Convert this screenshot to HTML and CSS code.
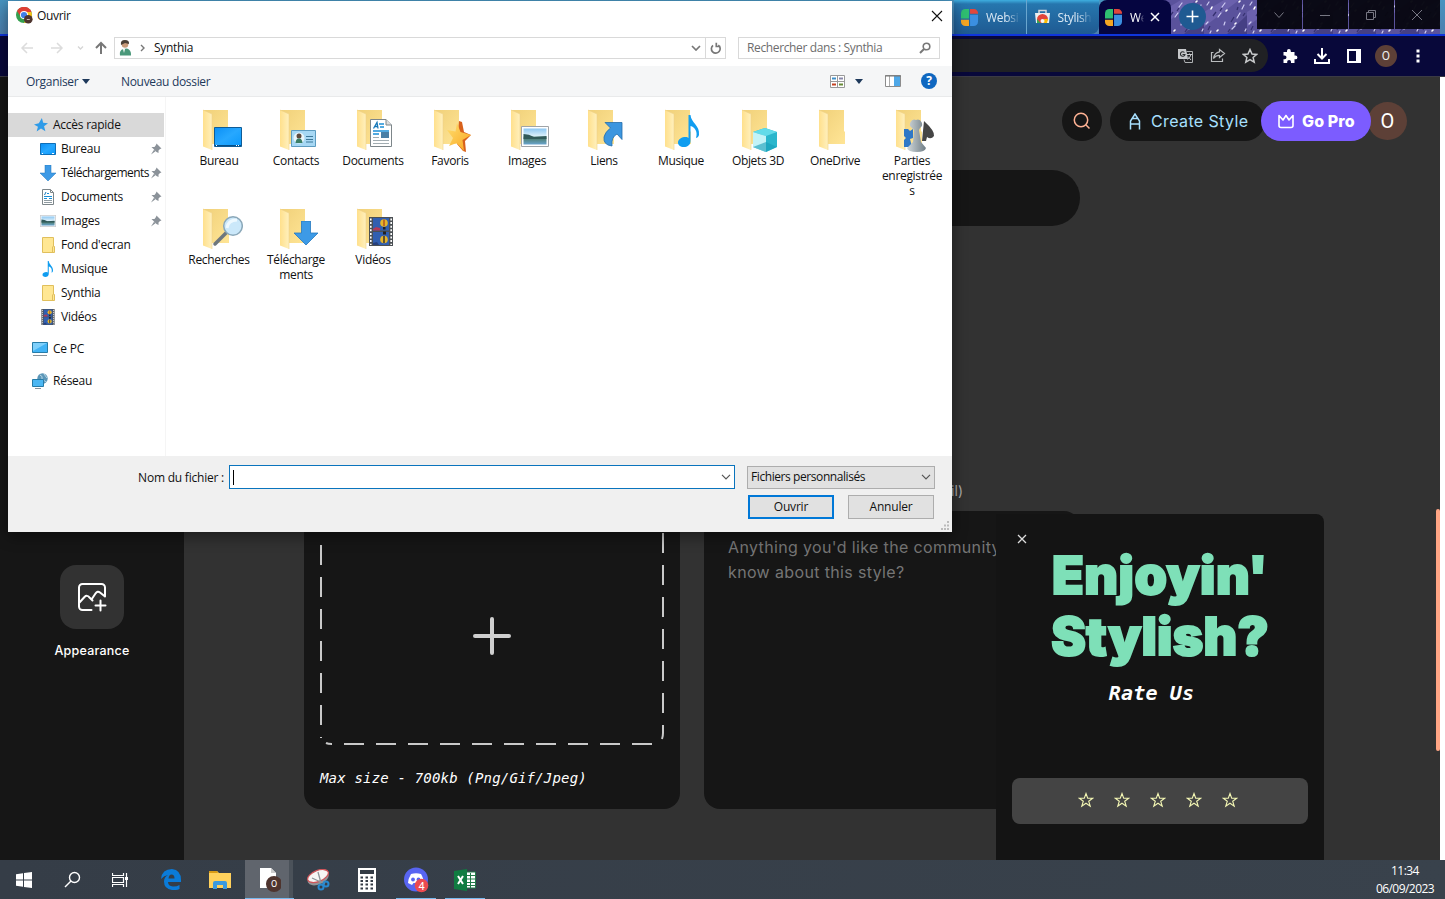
FILE: index.html
```html
<!DOCTYPE html>
<html lang="fr">
<head>
<meta charset="utf-8">
<title>Ouvrir</title>
<link rel="stylesheet" href="styles.css">
</head>
<body>
<svg class="defs" width="0" height="0">
  <defs>
    <linearGradient id="gf" x1="0" x2="1" y1="0" y2="1"><stop offset="0" stop-color="#f0d079"/><stop offset="1" stop-color="#ffe596"/></linearGradient>
    <linearGradient id="gl" x1="0" x2="1"><stop offset="0" stop-color="#ffe08c"/><stop offset="1" stop-color="#fff0bd"/></linearGradient>
    <linearGradient id="gb" x1="0" x2="1" y1="0" y2="1"><stop offset="0" stop-color="#0a8ff5"/><stop offset=".5" stop-color="#27a8ff"/><stop offset="1" stop-color="#0a98fb"/></linearGradient>
    <linearGradient id="gp" x1="0" x2="0" y1="0" y2="1"><stop offset="0" stop-color="#8cc7f2"/><stop offset=".45" stop-color="#d8eefa"/><stop offset=".6" stop-color="#4b7c6c"/><stop offset="1" stop-color="#6aa5cf"/></linearGradient>
    <linearGradient id="gs" x1="0" x2="1" y1="0" y2="1"><stop offset="0" stop-color="#ffdf70"/><stop offset="1" stop-color="#f9a51f"/></linearGradient>
    <linearGradient id="gc" x1="0" x2="1"><stop offset="0" stop-color="#d2d9dc"/><stop offset="1" stop-color="#6f7d85"/></linearGradient>
    <pattern id="rain" width="43" height="34" patternUnits="userSpaceOnUse">
      <rect width="43" height="34" fill="#5a529c"/>
      <path d="M0 12L20 0H35L0 27Z" fill="#6b61ad"/><path d="M23 34L43 15V34Z" fill="#453f84"/>
      <path d="M3 5l2-3M18 7l3-4M38 9l2-4M14 17l3-4M33 18l3-5M2 24l2-2M20 25l1-3M28 29l3-3M6 33l1-2M41 31l1-2" stroke="#cfcdf3" stroke-width="1.2" stroke-linecap="round"/>
      <path d="M7 9l1-2M22 11l1-1M35 2l1-1M13 31l1-1M31 24l1-1" stroke="#fff" stroke-width="1.6" stroke-linecap="round"/>
      <path d="M9 16l3-4M27 22l3-5M39 16l2-3M16 11l2-3M4 30l2-4M24 32l2-3M33 10l1-3" stroke="#353070" stroke-width="1.3"/>
    </pattern>
    <symbol id="folder" viewBox="0 0 48 48">
      <path d="M8 5H33V26l1 1V39H15Z" fill="url(#gf)"/><path d="M8 5L17 9V45L8 41.500Z" fill="url(#gl)"/><path d="M8 5L17 9V45" fill="none" stroke="#eed18a" stroke-width=".6"/>
    </symbol>
    <symbol id="smallfolder" viewBox="0 0 16 16"><path d="M2.500 .5H13.500V9.500H14.500V15.500H2.500Z" fill="#ffe793" stroke="#e0bf5c"/><path d="M12.500 9.500V15" stroke="#e0bf5c"/></symbol>
    <symbol id="note" viewBox="0 0 22 32"><path d="M10.500 0H12.500C13 8 22 10 21 20C20.500 22 19 23 18 23C20 17 17 12 12.500 11V26C12.500 30 9 32 6 32C2 32 0 30 0 27.500C0 24 4 22 7.500 22C9 22 10 22.500 10.500 23Z" fill="#109df0"/></symbol>
    <symbol id="down" viewBox="0 0 24 24"><path d="M7.500 0H16.500V12H24L12 24L0 12H7.500Z" fill="#3d9ae6" stroke="#2578bf" stroke-width=".8"/></symbol>
    <symbol id="pin" viewBox="0 0 12 12"><path d="M6.500 .5L11.500 5.500L10 6L8.500 7.500L8.500 10L6.500 9L3.500 6L1.500 4H4.500L6 2Z M4 6.700L5.500 8.200L1 11.500Z" fill="#8b9299"/></symbol>
    <symbol id="page" viewBox="0 0 22 28"><path d="M.5 .5H16L21.500 6V27.500H.5Z" fill="#fff" stroke="#7d868a"/><path d="M16 .5V6H21.500" fill="#ddd" stroke="#7d868a"/><path d="M9 5H14M10 8H14M3 12H19M3 15H9" stroke="#1b8fd6" stroke-width="1.300"/><path d="M3.500 9.500L7 3.500L8 9.500M5 7.500H8" stroke="#1878b8" stroke-width="1.300" fill="none"/><path d="M3 18.500H9M3 21.500H19M3 24.500H19" stroke="#a2adb2"/><path d="M11 13H19V19H11Z" fill="#4a7fa6"/></symbol>
    <symbol id="minipage" viewBox="0 0 16 16"><path d="M2.500 .5H10.500L13.500 3.500V15.500H2.500Z" fill="#fff" stroke="#7d868a"/><path d="M10.500 .5V3.500H13.500" fill="none" stroke="#7d868a"/><path d="M7 4.500H9M4 7.500H12M4 9.500H7M9 9.500H12" stroke="#1b8fd6"/><path d="M4.500 6L6 3" stroke="#1878b8"/><path d="M4 11.500H12M4 13.500H12" stroke="#8f9ba1"/></symbol>
    <symbol id="photo" viewBox="0 0 28 21"><path d="M.5 .5H27.500V20.500H.5Z" fill="#fff" stroke="#a0a4a8"/><path d="M2.500 2.500H25.500V18.500H2.500Z" fill="url(#gp)"/><path d="M2.500 8Q8 8 13 11L25.500 10V13H2.500Z" fill="#315a5a"/></symbol>
    <symbol id="film" viewBox="0 0 24 29"><path d="M0 0H24V29H0Z" fill="#4b5054"/><path d="M4 1H20V13.500H4ZM4 15H20V28H4Z" fill="#315fb0"/><path d="M1.800 1.500V28M22.200 1.500V28" stroke="#fff" stroke-width="1.600" stroke-dasharray="2 1.600"/><circle cx="15" cy="6" r="3.800" fill="#e6b52a"/><path d="M15 2.500V9" stroke="#b5541f" stroke-width="1.500"/><path d="M14 10h2.500v2.500H14z" fill="#222"/><circle cx="15" cy="22.500" r="3.800" fill="#e6b52a"/><path d="M15 19V26" stroke="#333" stroke-width="1.500"/><path d="M14 14.500h3v3h-3z" fill="#222"/><path d="M4 12l3-2 4 1v2.500H4Z" fill="#b03a5a"/><path d="M4 26l4-1 2 3H4Z" fill="#27407c"/></symbol>
    <symbol id="screen" viewBox="0 0 28 20"><path d="M.5 .5H27.500V19.500H.5Z" fill="url(#gb)" stroke="#0f5c96"/><path d="M1 18.500H27" stroke="#064f88"/><path d="M2 18.500h1M22 18.500h4" stroke="#fff" stroke-dasharray="1 1"/></symbol>
    <symbol id="fourcolor" viewBox="0 0 16 16"><path d="M0 9V4A4 4 0 0 1 4 0H7.500V9Z" fill="#2fbf71"/><path d="M8.500 0H12A4 4 0 0 1 16 4.500H8.500Z" fill="#e0473c"/><path d="M0 10H7.500V16H4A4 4 0 0 1 0 12Z" fill="#f5a623"/><path d="M8.500 5.500H16V12A4 4 0 0 1 12 16H8.500Z" fill="#3b8fe0"/></symbol>
    <symbol id="chev" viewBox="0 0 10 6"><path d="M1 .8L5 4.800L9 .8" fill="none" stroke="currentColor" stroke-width="1.200"/></symbol>
    <symbol id="star" viewBox="0 0 16 16"><path d="M8 1.500L9.700 6.200H14.700L10.700 9.200L12.200 14.200L8 11.200L3.800 14.200L5.300 9.200L1.300 6.200H6.300Z" fill="none" stroke="currentColor" stroke-width="1.100"/></symbol>
  </defs>
</svg>

<div class="browser">
  <div class="tabstrip">
    <svg class="rain" width="1445" height="34"><rect x="1160" width="280" height="34" fill="url(#rain)"/></svg>
    <div class="tab t1"><svg width="17" height="17"><use href="#fourcolor"/></svg><span>Websi</span></div>
    <div class="tab t2"><svg width="15" height="16" viewBox="0 0 15 16"><path d="M0 4H15L14 14H1Z" fill="#eceff1"/><path d="M4 4V1.500H11V4" fill="none" stroke="#d7dadd" stroke-width="1.500"/><path d="M2 10.500A5.500 5.500 0 0 1 13 10.500L11 14H4Z" fill="#e2453a"/><path d="M2 10L5.500 14H2Z" fill="#34a853"/><path d="M9 10H13L12 14H7Z" fill="#fbbc05"/><circle cx="7.500" cy="12" r="2" fill="#f3f5f6"/></svg><span>Stylish</span></div>
    <div class="tab t3"><svg width="17" height="17"><use href="#fourcolor"/></svg><span>We</span><svg width="10" height="10" viewBox="0 0 10 10"><path d="M1 1L9 9M9 1L1 9" stroke="#fff" stroke-width="1.500"/></svg></div>
    <div class="newtab"><svg width="13" height="13" viewBox="0 0 13 13"><path d="M6.500 .5V12.500M.5 6.500H12.500" stroke="#fff" stroke-width="1.600"/></svg></div>
    <div class="winctl">
      <div><svg width="12" height="12" viewBox="0 0 12 12"><path d="M1.500 3.500L6 8.500L10.500 3.500"/></svg></div>
      <div><svg width="12" height="12" viewBox="0 0 12 12"><path d="M1 6.500H11"/></svg></div>
      <div><svg width="12" height="12" viewBox="0 0 12 12"><path d="M1.500 3.500H8.500V10.500H1.500ZM3.500 3.500V1.500H10.500V8.500H8.500"/></svg></div>
      <div><svg width="12" height="12" viewBox="0 0 12 12"><path d="M1 1L11 11M11 1L1 11"/></svg></div>
    </div>
  </div>
  <div class="navbar">
    <div class="omnibox">
      <svg width="15" height="15" viewBox="0 0 15 15"><path d="M0 1H8L10 11H1A1 1 0 0 1 0 10Z" fill="#c6c8ca"/><path d="M8.500 3.500H14.500V14.500H7L6 11.500" fill="none" stroke="#aeb1b3"/><path d="M6.500 4.500A2.300 2.300 0 1 0 7 6.500H4.500" fill="none" stroke="#292b2d" stroke-width="1.100"/><path d="M9 6.500H14M11.500 5.500V6.500M13 6.500Q12 10 9.500 11.500M10 8.500L13 12" fill="none" stroke="#c6c8ca"/></svg>
      <svg width="16" height="15" viewBox="0 0 16 15"><path d="M3.500 4.500H1.500V13.500H12.500V10.500" fill="none" stroke="#b9bcbe" stroke-width="1.200"/><path d="M9.500 1.500L14.500 5.500L9.500 9.500V7.500Q6 7.200 3.500 10.500Q4.500 4.500 9.500 3.800Z" fill="none" stroke="#b9bcbe" stroke-width="1.200"/></svg>
      <svg width="16" height="16" viewBox="0 0 16 16" class="bookmark"><path d="M8 1.500L10 6L14.700 6.400L11.100 9.500L12.200 14.200L8 11.700L3.800 14.200L4.900 9.500L1.300 6.400L6 6Z" fill="none" stroke="#c9cbcd" stroke-width="1.500"/></svg>
    </div>
    <svg width="16" height="16" viewBox="0 0 16 16"><path d="M1.500 4H5V3A1.900 1.900 0 0 1 8.800 3V4H12.500V7.500H13.500A1.900 1.900 0 0 1 13.500 11.300H12.500V15H9V13.800A1.900 1.900 0 0 0 5.200 13.800V15H1.500V11.200H2.600A1.900 1.900 0 0 0 2.600 7.400H1.500Z" fill="#fff"/></svg>
    <svg width="16" height="16" viewBox="0 0 16 16"><path d="M8 0V10M3.500 6L8 10.500L12.500 6M1 11V15H15V11" fill="none" stroke="#fff" stroke-width="2"/></svg>
    <svg width="14" height="14" viewBox="0 0 14 14"><path d="M1 1H13V13H1Z" fill="none" stroke="#fff" stroke-width="2"/><path d="M9 1H13V13H9Z" fill="#fff"/></svg>
    <div class="ava">O</div>
    <svg width="4" height="14" viewBox="0 0 4 14"><path d="M.5 .5h3v3h-3zM.5 5.500h3v3h-3zM.5 10.500h3v3h-3z" fill="#fff"/></svg>
  </div>
  <div class="page">
    <aside class="side">
      <div class="tile"><svg width="30" height="30" viewBox="0 0 30 30"><path d="M14.500 28H5.500A3.500 3.500 0 0 1 2 24.500V5.500A3.500 3.500 0 0 1 5.500 2H24.500A3.500 3.500 0 0 1 28 5.500V14.500L23 10.500Q20.500 8.500 18.500 11.500L14.500 17.500M2 21L7.500 15Q10 12.500 12.500 15.500L15.500 18.500M18.500 23.500H28.500M23.500 18.500V28.500" fill="none" stroke="#fff" stroke-width="2" stroke-linecap="round" stroke-linejoin="round"/></svg></div>
      <div class="tilelabel">Appearance</div>
    </aside>
    <main class="main">
      <div class="actions">
        <div class="search"><svg width="18" height="18" viewBox="0 0 18 18"><circle cx="8" cy="8" r="6.700" fill="none" stroke="#ffb294" stroke-width="1.500"/><path d="M12.800 12.800L16.500 16.500" stroke="#ffb294" stroke-width="1.500"/></svg></div>
        <div class="create"><svg width="12" height="17" viewBox="0 0 12 17"><path d="M1.500 16.500V8L6 1L10.500 8V16.500M1.500 11H10.500M3.500 5.500H8.500" fill="none" stroke="#a8e0ff" stroke-width="1.500"/></svg><span>Create Style</span></div>
        <div class="gopro"><svg width="18" height="15" viewBox="0 0 18 15"><path d="M2 1.500V11.500Q2 13.500 4 13.500H14Q16 13.500 16 11.500V1.500L12 6L9 1.500L6 6Z" fill="none" stroke="#fff" stroke-width="1.600" stroke-linejoin="round"/></svg><span>Go Pro</span></div>
        <div class="user">O</div>
      </div>
      <div class="field"></div>
      <div class="lbl">il)</div>
      <div class="cards">
        <div class="card">
          <svg width="344" height="218" viewBox="0 0 344 218" class="drop"><g fill="none" stroke="#c9c9c9" stroke-width="2"><path d="M1 18V203" stroke-dasharray="20 12"/><path d="M343 6V190" stroke-dasharray="20 12"/><path d="M24 217H335" stroke-dasharray="20 12"/><path d="M1 210V211M6 216Q8 217 12 217M343 198V206Q343 209 342 212"/></g><path d="M172 92V126M155 109H189" stroke="#cfcfcf" stroke-width="4" stroke-linecap="round"/></svg>
          <div class="max">Max size - 700kb (Png/Gif/Jpeg)</div>
        </div>
        <div class="card note">Anything you'd like the community<br>know about this style?</div>
      </div>
      <div class="thumb"></div>
    </main>
    <div class="track"></div>
  </div>
</div>

<div class="popup">
  <svg class="px" width="10" height="10" viewBox="0 0 10 10"><path d="M1 1L9 9M9 1L1 9" stroke="#ddd" stroke-width="1.300"/></svg>
  <div class="big"><span class="l1">Enjoyin'</span><span class="l2">Stylish?</span></div>
  <div class="rate">Rate Us</div>
  <div class="stars"><svg><use href="#star"/></svg><svg><use href="#star"/></svg><svg><use href="#star"/></svg><svg><use href="#star"/></svg><svg><use href="#star"/></svg></div>
</div>

<div class="dialog">
  <div class="title"><svg width="17" height="17" viewBox="0 0 17 17"><circle cx="8" cy="8" r="8" fill="#35a04f"/><path d="M1 4A8 8 0 0 1 15.500 5H8L5 10Z" fill="#df3f33"/><path d="M15.300 5A8 8 0 0 1 8 16L11.500 9L8 5Z" fill="#fbc116"/><circle cx="8" cy="8" r="4" fill="#fff"/><circle cx="8" cy="8" r="3.100" fill="#3f7fe8"/><circle cx="12.300" cy="12.300" r="4.300" fill="#4e342e"/><path d="M10.800 12.500h3" stroke="#c7b7b1" stroke-width="1"/></svg><span>Ouvrir</span>
    <svg class="close" width="12" height="12" viewBox="0 0 12 12"><path d="M1 1L11 11M11 1L1 11" stroke="#111" stroke-width="1.100"/></svg></div>
  <div class="addr">
    <svg class="arr" width="90" height="14" viewBox="0 0 90 14"><path d="M13 7H2M7 2L2 7L7 12M31 7H42M37 2L42 7L37 12" fill="none" stroke="#dcdcdc" stroke-width="1.500"/><path d="M58 5.500L60.500 8L63 5.500" fill="none" stroke="#d5d5d5" stroke-width="1.300"/><path d="M81 13V2M76 7L81 2L86 7" fill="none" stroke="#777" stroke-width="2"/></svg>
    <div class="path"><svg width="13" height="16" viewBox="0 0 13 16"><path d="M1 15.500Q0 10 4.500 9L8 8.500Q12.500 10 12 15.500Z" fill="#4a987a"/><circle cx="6" cy="4.500" r="3.300" fill="#c99b7a"/><path d="M2 5Q1 0 6 0Q10.500 0 10 4L6 3Z" fill="#4c4036"/><path d="M4 9l1 4 1-4Z" fill="#fff"/></svg><svg width="6" height="8" viewBox="0 0 6 8"><path d="M1 1L4 4L1 7" fill="none" stroke="#777" stroke-width="1.400"/></svg><span>Synthia</span><svg class="dd" width="10" height="6" viewBox="0 0 10 6"><path d="M1 1L5 5L9 1" fill="none" stroke="#777" stroke-width="1.700"/></svg></div>
    <div class="refresh"><svg width="12" height="13" viewBox="0 0 12 13"><path d="M3 3.300A4.400 4.400 0 1 0 8.300 3.100M6.300 .8V4.500H10.500" fill="none" stroke="#777" stroke-width="1.700"/></svg></div>
    <div class="find"><span>Rechercher dans : Synthia</span><svg width="12" height="12" viewBox="0 0 12 12"><circle cx="7.500" cy="4.500" r="3.300" fill="none" stroke="#777" stroke-width="1.600"/><path d="M5 7L1 11" stroke="#777" stroke-width="2"/></svg></div>
  </div>
  <div class="tools"><span class="org">Organiser</span><i class="tri"></i><span class="nouv">Nouveau dossier</span>
    <svg class="view" width="15" height="13" viewBox="0 0 15 13"><path d="M.5 .5H14.500V12.500H.5ZM7.500 .5V12.500M.5 6.500H14.500" fill="#fff" stroke="#999"/><path d="M2 3.500H6" stroke="#3d8fc9" stroke-width="2"/><path d="M9 3.500H13" stroke="#88a" stroke-width="2"/><path d="M2 9.500H6" stroke="#c44222" stroke-width="2"/><path d="M9 9.500H13" stroke="#668a35" stroke-width="2"/></svg><i class="tri t2"></i>
    <svg class="pane" width="16" height="12" viewBox="0 0 16 12"><path d="M.5 .5H15.500V11.500H.5Z" fill="#fff" stroke="#8c8c8c"/><path d="M9 1H15V11H9Z" fill="#4fa8e8"/><path d="M4.500 1V11" stroke="#aaa"/><path d="M0 1H16" stroke="#777"/></svg><b class="help">?</b></div>
  <div class="body">
    <nav class="tree">
      <div class="row top sel"><svg width="14" height="14" viewBox="0 0 16 16"><path d="M9 0L10.500 5.500L16 6L11.500 9.500L13 15L8 12L3 15.500L4.500 10L0 7.500L5.500 6Z" fill="#2f9be8"/></svg><span>Accès rapide</span></div>
      <div class="row"><svg width="16" height="12" viewBox="0 0 16 12"><path d="M.5 .5H15.500V11.500H.5Z" fill="url(#gb)" stroke="#0f6fb8"/><path d="M2 10.500h1M12 10.500h2" stroke="#fff"/></svg><span>Bureau</span><svg class="pin"><use href="#pin"/></svg></div>
      <div class="row"><svg width="16" height="16"><use href="#down"/></svg><span class="tight">Téléchargements</span><svg class="pin"><use href="#pin"/></svg></div>
      <div class="row"><svg width="16" height="16"><use href="#minipage"/></svg><span>Documents</span><svg class="pin"><use href="#pin"/></svg></div>
      <div class="row"><svg width="16" height="12"><use href="#photo"/></svg><span>Images</span><svg class="pin"><use href="#pin"/></svg></div>
      <div class="row"><svg width="16" height="16"><use href="#smallfolder"/></svg><span>Fond d'ecran</span></div>
      <div class="row"><svg width="16" height="16"><use href="#note"/></svg><span>Musique</span></div>
      <div class="row"><svg width="16" height="16"><use href="#smallfolder"/></svg><span>Synthia</span></div>
      <div class="row"><svg width="16" height="16"><use href="#film"/></svg><span>Vidéos</span></div>
      <div class="row top root"><svg width="16" height="16" viewBox="0 0 16 16"><path d="M.5 1.500H15.500V11.500H.5Z" fill="#41b3f5" stroke="#267ca8"/><path d="M1 2H15L1 10Z" fill="#7fd0fb"/><path d="M1 14.500H15" stroke="#87929a"/></svg><span>Ce PC</span></div>
      <div class="row top root"><svg width="16" height="16" viewBox="0 0 16 16"><circle cx="10.500" cy="5.500" r="5.200" fill="#5b96b8"/><path d="M8 2Q11 3 10 6L14 9M12 1L15 5" stroke="#b9d8e5" fill="none"/><path d="M.5 6.500H11.500V13.500H.5Z" fill="#4cb7f3" stroke="#267ca8"/><path d="M3 15.500H9" stroke="#87929a"/></svg><span>Réseau</span></div>
    </nav>
    <div class="files">
      <div class="file"><svg viewBox="0 0 48 48"><use href="#folder"/><use href="#screen" x="19" y="22" width="28" height="20"/></svg><span>Bureau</span></div>
      <div class="file"><svg viewBox="0 0 48 48"><use href="#folder"/><path d="M19.500 25.500H43.500V41.500H19.500Z" fill="#a7d8f4" stroke="#5d9cc0"/><circle cx="27" cy="33" r="5.500" fill="#e9f5fa"/><circle cx="27" cy="31" r="2.500" fill="#5e4a3c"/><path d="M23.500 38Q24 33 27 33.500Q30 33 30.500 38Z" fill="#3b7f66"/><path d="M34 31.500H41M34 34.500H41M34 37H41" stroke="#3d7899"/></svg><span>Contacts</span></div>
      <div class="file"><svg viewBox="0 0 48 48"><use href="#folder"/><use href="#page" x="21" y="14" width="22" height="28"/></svg><span>Documents</span></div>
      <div class="file"><svg viewBox="0 0 48 48"><use href="#folder"/><path d="M33 16L36 17L38 27L45 30L39 36L40 47L37 46L31 39Z" fill="#d8611c"/><path d="M31 18L34.500 27L45 30L36.500 35L38 46L30.500 38L23 41L27 33L21 25L29.500 26.500Z" fill="url(#gs)"/></svg><span>Favoris</span></div>
      <div class="file"><svg viewBox="0 0 48 48"><use href="#folder"/><use href="#photo" x="18" y="21" width="28" height="21"/></svg><span>Images</span></div>
      <div class="file"><svg viewBox="0 0 48 48"><use href="#folder"/><path d="M25 17.500H42V34.500L37 29Q31 32 32 41Q23 40 24 32Q25 27 30.500 23Z" fill="#3c96df" stroke="#236da9" stroke-width=".8"/></svg><span>Liens</span></div>
      <div class="file"><svg viewBox="0 0 48 48"><use href="#folder"/><use href="#note" x="21" y="10" width="22" height="32"/></svg><span>Musique</span></div>
      <div class="file"><svg viewBox="0 0 48 48"><use href="#folder"/><path d="M31 23L43 27V42L32 47L19 42V27Z" fill="#2ab6cc"/><path d="M19 27L31 23L43 27L32 31Z" fill="#62dbe9"/><path d="M19 27L32 31V47L19 42Z" fill="#c3f3f7"/><path d="M19 42L32 37L43 42L32 47Z" fill="#159cb8" opacity=".6"/></svg><span>Objets 3D</span></div>
      <div class="file"><svg viewBox="0 0 48 48"><use href="#folder"/></svg><span>OneDrive</span></div>
      <div class="file"><svg viewBox="0 0 48 48"><use href="#folder"/><path d="M16 24H20L22 26L25 24V33L22 34L24 42H16V35L18 33L16 31Z" fill="#2f78c7"/><path d="M36 16Q47 26 46 31Q43 35 39 32L38 36H34Z" fill="#454545"/><path d="M28 15A4.500 4.500 0 0 1 32 23L31 25L33 37L38 43Q37 47 29 47Q20 47 19 43L25 37L26 25L24 23A4.500 4.500 0 0 1 28 15Z" fill="url(#gc)"/></svg><span>Parties<br>enregistrée<br>s</span></div>
      <div class="file"><svg viewBox="0 0 48 48"><use href="#folder"/><path d="M20 40L32 28" stroke="#6e777e" stroke-width="3.500" stroke-linecap="round"/><circle cx="38" cy="22" r="9.300" fill="#cbe8fa" stroke="#8ba8b9" stroke-width="1.500"/><path d="M32 24Q33 16 42 16" stroke="#eef9ff" stroke-width="3" fill="none"/></svg><span>Recherches</span></div>
      <div class="file"><svg viewBox="0 0 48 48"><use href="#folder"/><use href="#down" x="22" y="17" width="24" height="24"/></svg><span>Télécharge<br>ments</span></div>
      <div class="file"><svg viewBox="0 0 48 48"><use href="#folder"/><use href="#film" x="20" y="13" width="24" height="29"/></svg><span>Vidéos</span></div>
    </div>
  </div>
  <div class="foot">
    <div class="frow"><label>Nom du fichier :</label><div class="fname"><i class="caret"></i><svg class="fc"><use href="#chev"/></svg></div><div class="ftype"><span>Fichiers personnalisés</span><svg class="fc"><use href="#chev"/></svg></div></div>
    <div class="btns"><div class="btn ok">Ouvrir</div><div class="btn">Annuler</div></div>
    <svg class="grip" width="10" height="10" viewBox="0 0 10 10"><path d="M7 0h2v2h-2zM4 3.500h2v2H4zM7 3.500h2v2h-2zM1 7h2v2H1zM4 7h2v2H4zM7 7h2v2h-2z" fill="#bbb"/></svg>
  </div>
</div>

<div class="taskbar">
  <div class="tk s"><svg width="16" height="16" viewBox="0 0 16 16"><path d="M0 2.300L7 1.300V7.500H0ZM8 1.100L16 0V7.500H8ZM0 8.500H7V14.700L0 13.700ZM8 8.500H16V16L8 14.900Z" fill="#fff"/></svg></div>
  <div class="tk s"><svg width="17" height="17" viewBox="0 0 17 17"><circle cx="10.500" cy="6.500" r="5" fill="none" stroke="#fff" stroke-width="1.400"/><path d="M7 10L1 16" stroke="#fff" stroke-width="1.400"/></svg></div>
  <div class="tk s"><svg width="16" height="16" viewBox="0 0 16 16"><path d="M.5 1V3.500H11.500V1M.5 15V12.500H11.500V15M.5 5.500H11.500V10.500H.5ZM14.500 1V15" fill="none" stroke="#fff" stroke-width="1.200"/><path d="M13 5h3v3h-3z" fill="#fff"/></svg></div>
  <div class="tk first"><svg width="20" height="21" viewBox="0 0 20 21"><path d="M0 10Q1 0 11 0Q20 1 20 11V13H7Q7 17 12 17.500Q16 17.500 18.500 16V20Q15 21.500 11 21Q3 20 3 12.500Q3 8 7 6Q3 6.500 0 10ZM7.500 9.500H13.500Q13.500 5.500 10.500 5.500Q8 5.500 7.500 9.500Z" fill="#0b7bd8"/></svg></div>
  <div class="tk"><svg width="22" height="18" viewBox="0 0 22 18"><path d="M0 0H8L10 2H22V17H0Z" fill="#ffd15c"/><path d="M0 0H8L9 2H0Z" fill="#d99b15"/><path d="M4 18V12Q4 10 6 10H16Q18 10 18 12V18H14V14H8V18Z" fill="#3a9ae0"/></svg></div>
  <div class="tk active"><svg width="24" height="26" viewBox="0 0 24 26"><path d="M3 2H14L19 7V22H3Z" fill="#fff"/><path d="M14 2V7H19" fill="#ccc"/><circle cx="17" cy="18" r="8" fill="#4e342e"/><text x="17" y="21.300" text-anchor="middle" font-size="9" fill="#fff" font-family="Roboto">O</text></svg></div>
  <div class="tk"><svg width="24" height="22" viewBox="0 0 24 22"><ellipse cx="12" cy="9.500" rx="11" ry="6" transform="rotate(-22 12 9)" fill="#8f9498"/><ellipse cx="12" cy="7" rx="11" ry="5.500" transform="rotate(-22 12 7)" fill="#f7f5f3" stroke="#cf555a" stroke-width="1.300"/><path d="M12 3L15 14M6 9L19 15" stroke="#8e9499" stroke-width="1.300"/><circle cx="15" cy="18" r="2.500" fill="none" stroke="#2889d0" stroke-width="2"/><circle cx="20" cy="15" r="2.500" fill="none" stroke="#2889d0" stroke-width="2"/></svg></div>
  <div class="tk"><svg width="18" height="24" viewBox="0 0 18 24"><path d="M0 0H18V24H0Z" fill="#fff"/><path d="M2 2H16V6H2Z" fill="#333b45"/><path d="M2.500 9.500H16M2.500 13H16M2.500 16.500H16M2.500 20.500H16" stroke="#333b45" stroke-width="2" stroke-dasharray="2.500 2.500"/></svg></div>
  <div class="tk open"><svg width="26" height="26" viewBox="0 0 26 26"><circle cx="13" cy="12.500" r="12" fill="#5865f2"/><path d="M8 7Q13 5.500 18 7Q21 12 20.500 16L17 18L15.500 16H10.500L9 18L5 16Q5 12 8 7Z" fill="#fff"/><circle cx="10" cy="12.500" r="1.900" fill="#5865f2"/><circle cx="15.500" cy="12.500" r="1.900" fill="#5865f2"/><circle cx="18.500" cy="18.500" r="6.800" fill="#ed4a50"/><text x="18.500" y="22.500" text-anchor="middle" font-size="11" fill="#fff" font-family="Roboto">4</text></svg></div>
  <div class="tk open"><svg width="22" height="22" viewBox="0 0 22 22"><path d="M11 3H21.500V19H11Z" fill="#fff" stroke="#237a48"/><path d="M12 6.500H21M12 10H21M12 13.500H21M12 16.500H21M16.500 4V19" stroke="#237a48"/><path d="M0 2L13 0V22L0 20Z" fill="#107c41"/><path d="M4 7L9 15M9 7L4 15" stroke="#fff" stroke-width="2"/></svg></div>
  <div class="clock"><span>11:34</span><span>06/09/2023</span></div>
</div>
</body>
</html>
```

FILE: styles.css
```css
* { box-sizing: border-box; }
body { margin: 0; width: 1445px; height: 899px; overflow: hidden; background: #161616; font-family: "Open Sans", "Noto Sans", sans-serif; font-size: 12px; color: #111; }
svg { display: block; flex: none; }
.defs { position: absolute; }

/* browser */
.browser { position: absolute; left: 0; top: 0; width: 1445px; height: 860px; display: flex; flex-direction: column; }
.tabstrip { height: 34px; flex: none; display: flex; padding-left: 954px; background: linear-gradient(#4794c0, #4d7fae); position: relative; overflow: hidden; }
.rain { position: absolute; left: 0; top: 0; }
.tab { position: relative; display: flex; align-items: center; height: 34px; width: 72px; background: linear-gradient(#3eaee0 0, #2676ae 4px, #1f5a92 34px); color: #d9e8f4; padding-left: 7px; border-right: 1px solid #6aa6cf; white-space: nowrap; overflow: hidden; letter-spacing: -.3px; }
.tab.t2 { padding-left: 8px; border: 0; border-radius: 0 0 8px 0; }
.tab.t2, .tab.t1 { width: 72.500px; }
.tab.t3 { background: #050540; border: 0; border-radius: 8px 8px 0 0; width: 72px; padding-left: 6px; }
.tab span { margin-left: 8px; width: 34px; overflow: hidden; -webkit-mask-image: linear-gradient(90deg, #000 60%, transparent); }
.tab.t3 span { width: 14px; color: #fff; margin-right: 6px; }
.newtab { position: relative; width: 27px; height: 27px; border-radius: 50%; background: #1f5a92; margin: 3px 0 0 8px; display: flex; align-items: center; justify-content: center; }
.winctl { position: absolute; right: 5px; top: 0; width: 183px; height: 29px; display: flex; gap: 1px; }
.winctl div { flex: 1; background: rgba(7, 7, 17, .97); display: flex; align-items: center; justify-content: center; padding-right: 2px; }
.winctl path { fill: none; stroke: #777783; stroke-width: 1; }
.navbar { height: 43px; flex: none; border-top: 2px solid #0f35dc; border-bottom: 1px solid #3a3a44; background: #08083a; display: flex; align-items: center; padding: 0 0 1px 700px; position: relative; }
.omnibox { width: 568px; height: 33px; background: #202124; border-radius: 0 17px 17px 0; display: flex; align-items: center; justify-content: flex-end; padding-right: 10px; }
.omnibox svg + svg { margin-left: 17px; }
.omnibox .bookmark { margin-left: 16px; }
.navbar > svg { margin-left: 14px; }
.navbar > svg + svg { margin-left: 16px; }
.navbar > svg + svg + svg { margin-left: 17px; }
.ava { width: 22px; height: 22px; border-radius: 50%; background: #5d4037; color: #eee; font: 12px/22px Roboto, sans-serif; text-align: center; margin: 0 0 0 14px; }
.navbar > .ava + svg { margin-left: 19px; }
.page { flex: 1; display: flex; min-height: 0; }
.side { width: 184px; background: #161616; padding-top: 488px; display: flex; flex-direction: column; align-items: center; }
.tile { width: 64px; height: 64px; border-radius: 16px; background: #323232; display: flex; align-items: center; justify-content: center; }
.tilelabel { margin-top: 13px; font: 500 12.500px/18px Inter, sans-serif; color: #fff; letter-spacing: .22px; }
.main { width: 1256px; background: #323232; position: relative; padding: 24px 0 0 120px; }
.actions { display: flex; justify-content: flex-end; align-items: center; padding-right: 33px; height: 40px; font-family: Inter, sans-serif; font-size: 16px; }
.search { width: 40px; height: 40px; border-radius: 50%; background: #161616; display: flex; align-items: center; justify-content: center; margin-right: 8px; }
.create { width: 155px; height: 40px; border-radius: 20px; background: #161616; color: #a8e0ff; display: flex; align-items: center; padding-left: 19px; gap: 10px; white-space: nowrap; letter-spacing: .37px; }
.gopro { width: 110px; height: 40px; border-radius: 20px; background: #7c5cff; color: #fff; margin-left: -4px; display: flex; align-items: center; padding-left: 16px; gap: 7px; font-weight: 800; font-size: 16px; letter-spacing: .1px; white-space: nowrap; position: relative; z-index: 1; }
.user { width: 39px; height: 38px; border-radius: 50%; background: #5d4037; color: #fff; font: 20px/38px Roboto, sans-serif; text-align: center; margin-left: -3px; }
.field { margin-top: 29px; width: 776px; height: 56px; border-radius: 28px; background: #161616; }
.lbl { margin: 255px 0 0 400px; height: 20px; width: 259px; text-align: right; font: 14px/20px Inter, sans-serif; color: #aaa; }
.cards { display: flex; gap: 24px; margin-top: 10px; }
.card { width: 376px; height: 298px; border-radius: 16px; background: #161616; padding: 16px; }
.card.note { padding: 24px 24px; color: #757575; font: 16px/25px Inter, sans-serif; white-space: nowrap; letter-spacing: .36px; }
.max { margin-top: 23px; font: italic 14px/21px "DejaVu Sans Mono", monospace; color: #fff; letter-spacing: .18px; white-space: nowrap; }
.thumb { position: absolute; right: 0; top: 432px; width: 4px; height: 242px; border-radius: 2px; background: #ffa585; }
.track { width: 5px; background: #fff; }

/* rating popup */
.popup { position: absolute; left: 996px; top: 514px; width: 328px; height: 346px; background: #141414; border-radius: 0 8px 0 0; padding: 20px 16px 0; }
.px { margin-left: 5px; }
.big { display: flex; flex-direction: column; align-items: center; color: #7ee0b8; font: 900 52px/61px Inter, sans-serif; white-space: nowrap; margin-top: 1px; -webkit-text-stroke: 2px #7ee0b8; }
.big .l1 { letter-spacing: .5px; }
.big .l2 { letter-spacing: .2px; }
.rate { font: italic bold 20px/30px "DejaVu Sans Mono", monospace; color: #fff; text-align: center; padding-right: 17px; letter-spacing: .2px; margin-top: 11px; }
.stars { margin-top: 70px; height: 46px; border-radius: 8px; background: #444; display: flex; gap: 20px; align-items: center; justify-content: center; color: #f4f7b4; padding: 0 4px 2px 0; }
.stars svg { width: 16px; height: 16px; }

/* file dialog */
.dialog { position: absolute; left: 8px; top: 1px; width: 944px; height: 531px; background: #fff; box-shadow: 0 4px 14px rgba(0, 0, 0, .45); display: flex; flex-direction: column; letter-spacing: -.32px; }
.title { height: 30px; display: flex; align-items: center; padding: 0 9px 1px 8px; gap: 4px; }
.close { margin-left: auto; }
.addr { height: 35px; display: flex; align-items: center; padding: 0 12px 1px; }
.arr { margin-right: 4px; }
.path { width: 592px; height: 22px; border: 1px solid #d9d9d9; display: flex; align-items: center; padding: 0 4px 1px; }
.path svg + svg { margin-left: 8px; }
.path span { margin-left: 8px; }
.path .dd { margin-left: auto !important; }
.refresh { width: 20px; height: 22px; border: 1px solid #d9d9d9; border-left: 0; display: flex; align-items: center; justify-content: center; margin-right: 12px; }
.find { flex: 1; height: 22px; border: 1px solid #d9d9d9; display: flex; align-items: center; justify-content: space-between; padding: 0 8px 1px; color: #6d6d6d; letter-spacing: -.37px; }
.tools { height: 31px; background: #f5f6f7; border-bottom: 1px solid #e9eaeb; display: flex; align-items: center; color: #1e395b; padding: 0 15px 0 18px; }
.org { width: 56px; white-space: nowrap; }
.tri { border: 4px solid transparent; border-top: 5px solid #1e395b; border-bottom: 0; }
.nouv { margin-left: 31px; }
.view { margin-left: auto; }
.tri.t2 { margin: 0 22px 0 10px; }
.help { width: 16px; height: 16px; border-radius: 50%; background: #0f67c0; color: #fff; text-align: center; font-size: 12px; line-height: 16px; margin-left: 20px; }
.body { flex: 1; display: flex; min-height: 0; }
.tree { width: 158px; border-right: 1px solid #f5f5f5; padding-top: 16px; }
.row { height: 24px; width: 156px; display: flex; align-items: center; padding: 0 0 1px 32px; gap: 5px; }
.row span { white-space: nowrap; letter-spacing: -.25px; }
.row .tight { letter-spacing: -.55px; margin-right: -4px; }
.row.top { padding-left: 26px; }
.row.root { margin-top: 8px; padding-left: 24px; }
.sel { background: #d9d9d9; }
.pin { width: 12px; height: 12px; margin: 0 2px 0 auto; }
.files { padding: 8px 0 0 15px; display: grid; grid-template-columns: repeat(10, 77px); grid-auto-rows: 99px; align-content: start; }
.file { display: flex; flex-direction: column; align-items: center; line-height: 15px; text-align: center; white-space: nowrap; letter-spacing: -.32px; }
.file svg { width: 48px; height: 48px; margin-right: 2px; }
.file span { margin-right: 1px; }
.foot { height: 76px; background: #f0f0f0; padding: 9px 17px 0 0; position: relative; }
.frow { display: flex; justify-content: flex-end; align-items: center; height: 24px; }
.frow label { letter-spacing: -.22px; }
.fname { width: 506px; height: 24px; background: #fff; border: 1px solid #0a74bd; margin: 0 12px 0 5px; display: flex; align-items: center; justify-content: space-between; padding: 0 3px; }
.caret { width: 1px; height: 15px; background: #000; }
.fc { width: 10px; height: 6px; color: #555; }
.ftype { width: 188px; height: 23px; background: #e1e1e1; border: 1px solid #adadad; display: flex; align-items: center; justify-content: space-between; padding: 0 3px 1px; letter-spacing: -.42px; }
.btns { display: flex; justify-content: flex-end; gap: 14px; margin-top: 6px; padding-right: 1px; }
.btn { width: 86px; height: 24px; background: #e1e1e1; border: 1px solid #adadad; text-align: center; line-height: 22px; letter-spacing: -.2px; }
.btn.ok { border: 2px solid #0078d7; line-height: 20px; }
.grip { position: absolute; right: 2px; bottom: 1px; }

/* taskbar */
.taskbar { position: absolute; left: 0; top: 860px; width: 1445px; height: 39px; background: linear-gradient(90deg, #353d47, #39424c); display: flex; }
.tk { width: 49px; height: 39px; display: flex; align-items: center; justify-content: center; padding-right: 2px; }
.tk.s { width: 48px; padding-right: 0; }
.tk.first { margin-left: 3px; }
.tk.active { background: linear-gradient(90deg, #60656d 44px, #4b525a 44px) 0 0 / 48px 100% no-repeat; border-bottom: 1px solid #76b9ed; }
.tk.open { background: linear-gradient(#76b9ed, #76b9ed) 4px bottom / 40px 1px no-repeat; }
.clock { margin-left: auto; width: 80px; display: flex; flex-direction: column; align-items: center; color: #fff; line-height: 18px; padding-top: 2px; letter-spacing: -.55px; }
```
